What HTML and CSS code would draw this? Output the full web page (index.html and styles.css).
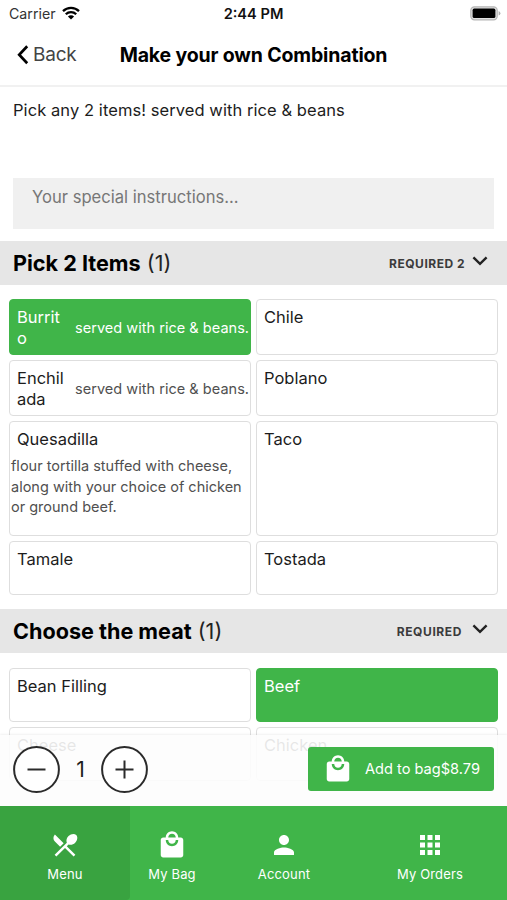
FILE: index.html
```html
<!DOCTYPE html>
<html lang="en">
<head>
<meta charset="utf-8">
<title>Make your own Combination</title>
<link rel="stylesheet" href="styles.css">
</head>
<body>
<div class="screen">
  <div class="status">
    <div class="carrier"><span class="carrier-name">Carrier</span>
      <svg class="wifi" viewBox="0 0 18 14"><path d="M1 5.2a11.5 11.5 0 0 1 16 0M3.8 8.2a7.4 7.4 0 0 1 10.4 0" fill="none" stroke="#000" stroke-width="2.3"/><path d="M9 13.6 5.9 10.5a4.4 4.4 0 0 1 6.2 0Z"/></svg>
    </div>
    <div class="clock"><span class="clock-text">2:44 PM</span></div>
    <svg class="battery" viewBox="0 0 31 15"><rect x=".8" y=".8" width="26.4" height="13" rx="3.6" fill="#e2e2e2" stroke="#b5b5b5" stroke-width="1.2"/><rect x="2.6" y="2.6" width="22.8" height="9.4" rx="1.6"/><path d="M28.6 5v4.6q1.8-.7 1.8-2.3t-1.8-2.3Z" fill="#b0b0b0"/></svg>
  </div>
  <header class="header">
    <a class="back"><svg class="back-icon" viewBox="0 0 12 20"><path d="M10.2 1.2 2.2 9.7l8 8.5" fill="none" stroke="#000" stroke-width="2.7"/></svg><span class="back-label">Back</span></a>
    <h1 class="title"><span class="title-text">Make your own Combination</span></h1>
  </header>
  <main class="content">
    <p class="intro"><span class="intro-text">Pick any 2 items! served with rice &amp; beans</span></p>
    <div class="instructions"><span class="instructions-text">Your special instructions...</span></div>

    <div class="section">
      <h2 class="section-title"><span class="name-a">Pick 2 Items</span> <span class="count">(1)</span></h2>
      <span class="required">REQUIRED 2</span>
      <svg class="chevron" viewBox="0 0 16 10"><path d="m1.4 1.4 6.6 6.4 6.6-6.4" fill="none" stroke="#222" stroke-width="2.4"/></svg>
    </div>
    <div class="grid items">
      <div class="card selected row"><span class="label narrow">Burrit<br>o</span><span class="note">served with rice &amp; beans.</span></div>
      <div class="card"><span class="label">Chile</span></div>
      <div class="card row"><span class="label narrow">Enchil<br>ada</span><span class="note">served with rice &amp; beans.</span></div>
      <div class="card"><span class="label">Poblano</span></div>
      <div class="card"><span class="label">Quesadilla</span><span class="desc">flour tortilla stuffed with cheese,<br>along with your choice of chicken<br>or ground beef.</span></div>
      <div class="card"><span class="label">Taco</span></div>
      <div class="card"><span class="label">Tamale</span></div>
      <div class="card"><span class="label">Tostada</span></div>
    </div>

    <div class="section">
      <h2 class="section-title"><span class="name-b">Choose the meat</span> <span class="count">(1)</span></h2>
      <span class="required plain">REQUIRED</span>
      <svg class="chevron" viewBox="0 0 16 10"><path d="m1.4 1.4 6.6 6.4 6.6-6.4" fill="none" stroke="#222" stroke-width="2.4"/></svg>
    </div>
    <div class="grid meats">
      <div class="card"><span class="label">Bean Filling</span></div>
      <div class="card selected"><span class="label">Beef</span></div>
      <div class="card"><span class="label">Cheese</span></div>
      <div class="card"><span class="label">Chicken</span></div>
    </div>
  </main>

  <div class="dock">
    <div class="actions">
      <div class="stepper">
        <svg class="circle" viewBox="0 0 47 47"><circle cx="23.5" cy="23.5" r="22.4" fill="#fff" stroke="#2b2b2b" stroke-width="2"/><path d="M14.5 23.5h18" stroke="#2b2b2b" stroke-width="2"/></svg>
        <span class="quantity">1</span>
        <svg class="circle" viewBox="0 0 47 47"><circle cx="23.5" cy="23.5" r="22.4" fill="#fff" stroke="#2b2b2b" stroke-width="2"/><path d="M14.5 23.5h18M23.5 14.5v18" stroke="#2b2b2b" stroke-width="2"/></svg>
      </div>
      <div class="add">
        <svg class="icon" viewBox="0 0 24 24"><path d="M19 6h-2c0-2.76-2.24-5-5-5S7 3.24 7 6H5c-1.1 0-1.99.9-1.99 2L3 20c0 1.1.9 2 2 2h14c1.1 0 2-.9 2-2V8c0-1.1-.9-2-2-2zm-7-3c1.66 0 3 1.34 3 3H9c0-1.66 1.34-3 3-3zm0 10c-2.76 0-5-2.24-5-5h2c0 1.66 1.34 3 3 3s3-1.34 3-3h2c0 2.76-2.24 5-5 5z"/></svg>
        <span class="add-label">Add to bag$8.79</span>
      </div>
    </div>
    <nav class="tabs">
      <div class="tab active"><svg class="icon" viewBox="0 0 24 24"><path d="M8.1 13.34l2.83-2.83L3.91 3.5c-1.56 1.56-1.56 4.09 0 5.66l4.19 4.18zm6.78-1.81c1.53.71 3.68.21 5.27-1.38 1.91-1.91 2.28-4.65.81-6.12-1.46-1.46-4.2-1.1-6.12.81-1.59 1.59-2.09 3.74-1.38 5.27L3.7 19.87l1.41 1.41L12 14.41l6.88 6.88 1.41-1.41L13.41 13l1.47-1.47z"/></svg><span class="tab-label">Menu</span></div>
      <div class="tab"><svg class="icon" viewBox="0 0 24 24"><path d="M19 6h-2c0-2.76-2.24-5-5-5S7 3.24 7 6H5c-1.1 0-1.99.9-1.99 2L3 20c0 1.1.9 2 2 2h14c1.1 0 2-.9 2-2V8c0-1.1-.9-2-2-2zm-7-3c1.66 0 3 1.34 3 3H9c0-1.66 1.34-3 3-3zm0 10c-2.76 0-5-2.24-5-5h2c0 1.66 1.34 3 3 3s3-1.34 3-3h2c0 2.76-2.24 5-5 5z"/></svg><span class="tab-label">My Bag</span></div>
      <div class="tab"><svg class="icon" viewBox="0 0 24 24"><path d="M12 12c2.21 0 4-1.79 4-4s-1.79-4-4-4-4 1.79-4 4 1.79 4 4 4zm0 2c-2.67 0-8 1.34-8 4v2h16v-2c0-2.66-5.33-4-8-4z"/></svg><span class="tab-label">Account</span></div>
      <div class="tab"><svg class="icon" viewBox="0 0 24 24"><path d="M4 8h4V4H4v4zm6 12h4v-4h-4v4zm-6 0h4v-4H4v4zm0-6h4v-4H4v4zm6 0h4v-4h-4v4zm6-10v4h4V4h-4zm-6 4h4V4h-4v4zm6 6h4v-4h-4v4zm0 6h4v-4h-4v4z"/></svg><span class="tab-label">My Orders</span></div>
    </nav>
  </div>
</div>
</body>
</html>
```
FILE: styles.css
```css
* { box-sizing: border-box; }
body { margin: 0; font-family: Inter, "Liberation Sans", sans-serif; color: #1c1c1c; background: #fff; }
svg { display: block; flex: none; }
h1, h2, p { margin: 0; }

.screen { position: relative; height: 900px; overflow: hidden; }

.status { display: grid; grid-template-columns: 1fr auto 1fr; align-items: center; height: 28px; padding: 0 6px 0 9px; }
.carrier { display: flex; align-items: center; gap: 6px; font-size: 14.2px; line-height: 20px; color: #333; }
.wifi { width: 18px; height: 14px; margin-bottom: 3px; }
.clock { margin-right: 3px; font-size: 14.6px; font-weight: 600; line-height: 20px; color: #111; }
.battery { width: 31px; height: 15px; justify-self: end; margin-bottom: 1px; }

.header { display: grid; grid-template-columns: 103px 1fr 103px; align-items: center; height: 59px; padding-bottom: 4px; border-bottom: 2px solid #f1f1f1; }
.back { display: flex; align-items: center; gap: 4px; padding-left: 17px; font-size: 19px; letter-spacing: -.2px; color: #444; }
.back-icon { width: 12px; height: 20px; }
.title { font-size: 19.5px; font-weight: 700; letter-spacing: -.15px; text-align: center; color: #000; white-space: nowrap; }

.intro { height: 91px; padding: 12px 13px 0; font-size: 16.5px; letter-spacing: .07px; line-height: 22px; }
.instructions { height: 51px; margin: 0 13px 12px; padding: 8px 19px; background: #f0f0f0; font-size: 16.6px; line-height: 22px; color: #777; }

.section { display: flex; align-items: center; height: 44px; padding: 0 19px 0 13px; background: #e6e6e6; }
.section-title { flex: 1; padding-bottom: 1px; font-size: 21.6px; font-weight: 700; line-height: 28px; color: #000; }
.count { margin-left: 1px; font-weight: 400; color: #222; }
.required { font-size: 12px; font-weight: 700; letter-spacing: .5px; color: #3b3b3b; }
.plain { margin-right: 3px; letter-spacing: .6px; }
.chevron { width: 16px; height: 10px; margin: 0 0 4px 7px; }

.grid { display: grid; grid-template-columns: 1fr 1fr; gap: 5px 5px; padding: 14px 9px 14px 9px; }
.items { grid-template-rows: 56px 56px 115px 54px; }
.meats { grid-template-rows: 54px 54px; padding-top: 15px; }
.card { display: flex; flex-direction: column; border: 1px solid #dedede; border-radius: 4px; overflow: hidden; background: #fff; }
.card.row { flex-direction: row; }
.label { padding: 7px 7px 0; font-size: 16.5px; line-height: 21px; white-space: nowrap; }
.narrow { width: 65px; flex: none; }
.note { padding-top: 18px; font-size: 14.5px; letter-spacing: .03px; line-height: 20px; color: #505050; white-space: nowrap; }
.desc { padding: 6px 0 0 1px; font-size: 14.5px; line-height: 20.5px; color: #505050; white-space: nowrap; }
.selected { background: #40b549; border-color: #40b549; color: #fff; }
.selected .note { color: #fff; }

.dock { position: absolute; left: 0; right: 0; bottom: 0; }
.actions { display: flex; align-items: center; justify-content: space-between; height: 71px; padding: 0 13px 2px; background: rgba(253, 253, 253, .9); box-shadow: 0 -1px 2px rgba(0, 0, 0, .06); }
.stepper { display: flex; align-items: center; }
.circle { width: 47px; height: 47px; }
.quantity { width: 41px; text-align: center; font-size: 21px; }
.add { display: flex; align-items: center; width: 186px; height: 44px; padding-left: 15px; border-radius: 3px; background: #40b549; color: #fff; font-size: 14.6px; margin-bottom: 1px; }
.add-label { margin-left: 12px; white-space: nowrap; }
.icon { width: 30px; height: 30px; fill: #fff; }

.tabs { display: grid; grid-template-columns: 130px 84px 140px 152px; height: 94px; background: #40b549; color: #fff; }
.tab { display: flex; flex-direction: column; align-items: center; padding-top: 24px; font-size: 13px; letter-spacing: .15px; line-height: 18px; }
.tab-label { margin-top: 5px; white-space: nowrap; }
.active { background: #39a340; border-radius: 0 0 4px 0; }
```
